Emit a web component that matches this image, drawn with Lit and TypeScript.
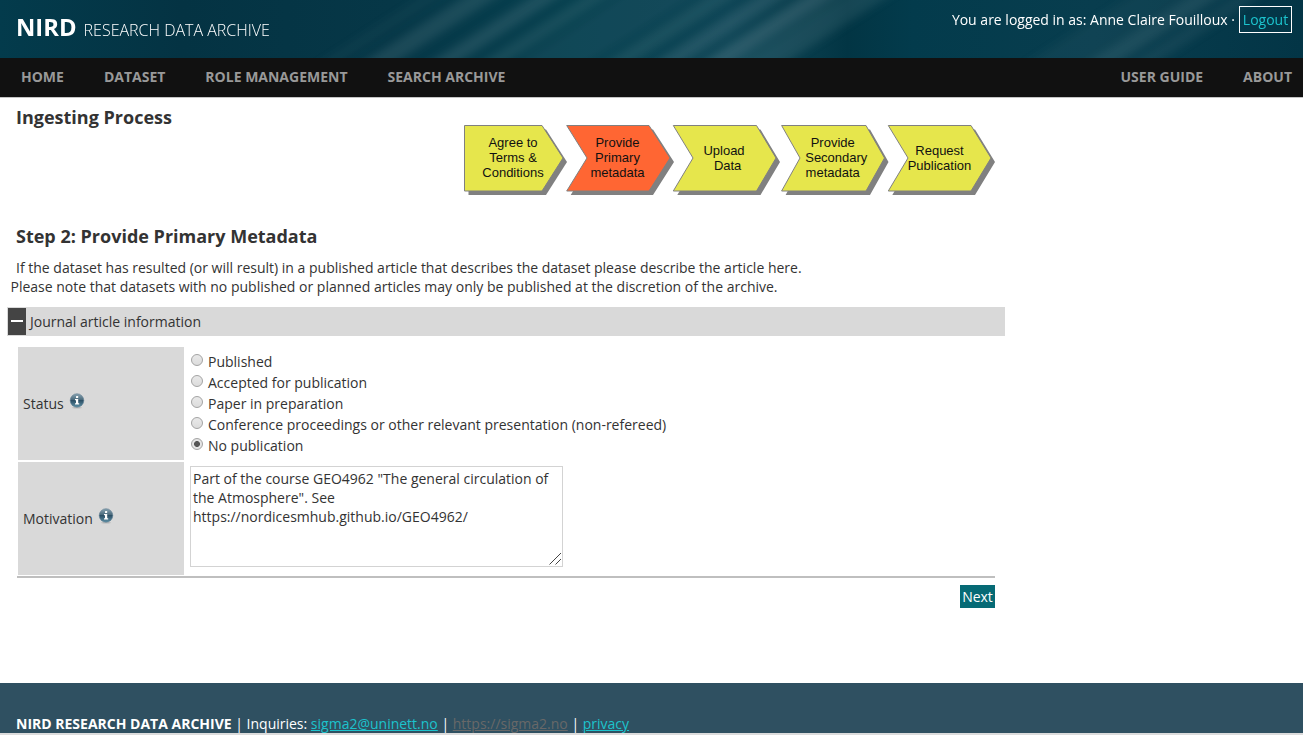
import { LitElement, html, css, svg } from "lit";
import { customElement } from "lit/decorators.js";

interface Step {
  points: string;
  cx: number;
  y: number;
  lines: string[];
  active?: boolean;
}

const STEPS: Step[] = [
  { points: "0.5,0.5 78,0.5 99,33 78,66 0.5,66", cx: 49, y: 22, lines: ["Agree to", "Terms &", "Conditions"] },
  { points: "102.7,0.5 185,0.5 206,33 185,66 102.7,66 123,33", cx: 153.5, y: 22, lines: ["Provide", "Primary", "metadata"], active: true },
  { points: "209.3,0.5 292.5,0.5 312,33 292.5,66 209.3,66 229,33", cx: 260, y: 30, lines: ["Upload", "\u00a0 Data"] },
  { points: "317.6,0.5 402,0.5 420.5,33 402,66 317.6,66 336,33", cx: 368.7, y: 22, lines: ["Provide", "\u00a0 Secondary", "metadata"] },
  { points: "424.3,0.5 507,0.5 527,33 507,66 424.3,66 444,33", cx: 475.5, y: 30, lines: ["Request", "Publication"] },
];

const STATUSES = [
  "Published",
  "Accepted for publication",
  "Paper in preparation",
  "Conference proceedings or other relevant presentation (non-refereed)",
  "No publication",
];

// Light streaks in the banner: x where each meets the bottom edge, width, opacity.
const STREAKS: [number, number, number][] = [
  [335, 10, 0.04],
  [385, 18, 0.11],
  [450, 15, 0.12],
  [500, 14, 0.09],
  [560, 40, 0.05],
  [625, 16, 0.09],
  [675, 16, 0.13],
  [723, 17, 0.16],
  [768, 26, 0.1],
  [1060, 30, 0.04],
  [1108, 18, 0.11],
  [1150, 14, 0.07],
];

@customElement("info-icon")
export class InfoIcon extends LitElement {
  static styles = css`
    :host { display: block; width: 16px; height: 16px; }
    svg { display: block; }
  `;
  render() {
    return html`<svg width="16" height="16" viewBox="0 0 16 16">
      <defs>
        <linearGradient id="g" x1="0" y1="0" x2="0" y2="1">
          <stop offset="0" stop-color="#8aa5b3" />
          <stop offset=".45" stop-color="#49697b" />
          <stop offset=".5" stop-color="#2c5066" />
          <stop offset="1" stop-color="#5f91a6" />
        </linearGradient>
      </defs>
      <ellipse cx="8" cy="14.8" rx="5" ry=".8" fill="#999" opacity=".5" />
      <circle cx="8" cy="7.5" r="6.8" fill="url(#g)" stroke="#54748a" stroke-width=".5" />
      <rect x="7" y="3" width="2.2" height="2" rx=".5" fill="#fff" />
      <path d="M6 6h3.2v4.2h1V11.5H6v-1.3h1V7.3H6z" fill="#fff" />
    </svg>`;
  }
}

@customElement("app-root")
export class AppRoot extends LitElement {
  static styles = css`
    :host {
      display: flex;
      flex-direction: column;
      height: 735px;
      overflow: hidden;
      background: #fff;
      color: #333;
      font: 14px/19px "Open Sans", sans-serif;
    }
    * { box-sizing: border-box; }
    a { color: #1cc3cd; }
    .banner { display: grid; height: 58px; flex: none; background: #04394a; }
    .banner > * { grid-area: 1 / 1; }
    .bar { display: flex; justify-content: space-between; padding: 0 11px 0 16px; color: #fff; z-index: 1; }
    .brand { display: flex; align-items: baseline; gap: 7px; margin-top: 11px; line-height: 32px; white-space: nowrap; }
    .brand b { font-size: 23.8px; }
    .brand span { font-size: 16px; font-weight: 300; letter-spacing: 0; }
    .user { display: flex; gap: 4px; height: 27px; margin-top: 6px; line-height: 28px; white-space: nowrap; }
    .logout { width: 53px; border: 1px solid #fff; line-height: 26px; text-align: center; text-decoration: none; }
    .nav { display: flex; flex: none; height: 39px; padding: 0 11px 0 21px; gap: 40px; background: #111; color: #999; font-size: 14px; font-weight: 700; line-height: 38px; white-space: nowrap; }
    .push { margin-left: auto; }
    .rule { height: 1px; flex: none; background: #c4c4c4; }
    main { flex: none; height: 585px; }
    h1, h2 { margin: 0; font-size: 18px; line-height: 24px; font-weight: 700; }
    .top { display: flex; height: 126px; padding: 7px 0 0 16px; }
    h1 { width: 448px; }
    .steps { margin-top: 20px; display: block; }
    .steps text { font: 13px "Liberation Sans", Arial, sans-serif; fill: #111; text-anchor: middle; }
    h2 { margin-left: 16px; }
    .intro { margin: 10px 0 0 10.5px; white-space: nowrap; }
    .intro span { margin-left: 5.5px; }
    .section { display: flex; align-items: center; width: 998px; height: 29px; margin: 11px 0 0 7px; padding: 1px; background: #d9d9d9; }
    .toggle { width: 18px; height: 27px; padding: 12px 3px; background: #444; margin-right: 4px; }
    .toggle i { display: block; height: 2px; background: #fff; }
    .form { display: grid; grid-template-columns: 166px 1fr; grid-template-rows: 113px 113px; gap: 2px 6px; width: 978px; margin: 11px 0 0 17px; padding: 0 0 1px 1px; border-bottom: 2px solid #bfbfbf; }
    .label { display: flex; align-items: center; gap: 5px; padding-left: 5px; background: #d9d9d9; }
    .label info-icon { margin-top: -5px; }
    .choices { padding-top: 4px; }
    .choice { display: flex; height: 21px; line-height: 21px; gap: 5px; white-space: nowrap; }
    .dot { width: 12px; height: 12px; margin: 3px 0 0 1px; border: 1px solid #a3a3a3; border-radius: 50%; background: linear-gradient(#e9e9e9, #dcdcdc); }
    .dot.on { background: radial-gradient(circle, #555 0 2.6px, #e4e4e4 3.3px); }
    .area { width: 373px; height: 101px; margin-top: 4px; padding: 2px; border: 1px solid #d3d3d3; background: #fff; display: grid; white-space: pre-line; }
    .area > * { grid-area: 1 / 1; }
    .grip { align-self: end; justify-self: end; margin: 0 -2px -1px 0; }
    .next { display: block; width: 35px; height: 23px; margin: 7px 0 0 960px; padding: 0; border: 0; background: #066a75; color: #fff; font: inherit; line-height: 23px; text-align: center; }
    footer { flex: none; height: 50px; padding: 31px 0 0 16px; background: #2f5061; color: #fff; white-space: nowrap; overflow: hidden; }
    footer .dim { color: #686868; }
    .edge { flex: 1; background: #dcdcdc; }
  `;

  private banner() {
    return html`<svg width="1303" height="58" viewBox="0 0 1303 58">
      <defs>
        <linearGradient id="base">
          <stop offset="0" stop-color="#033b4c" />
          <stop offset=".14" stop-color="#043343" />
          <stop offset=".3" stop-color="#063747" />
          <stop offset=".44" stop-color="#06404f" />
          <stop offset=".56" stop-color="#0b4354" />
          <stop offset=".63" stop-color="#063a49" />
          <stop offset=".65" stop-color="#023544" />
          <stop offset=".7" stop-color="#033b4c" />
          <stop offset=".84" stop-color="#083d4e" />
          <stop offset="1" stop-color="#033546" />
        </linearGradient>
        <filter id="soft" x="-20%" y="-60%" width="140%" height="220%"><feGaussianBlur stdDeviation="5" /></filter>
      </defs>
      <rect width="1303" height="58" fill="url(#base)" />
      <g filter="url(#soft)">
        ${STREAKS.map(
          ([x, w, o]) => svg`<path d="M${x - 30} 78L${x + 125} -22" stroke="#a9bcc4" stroke-width=${w} opacity=${o * 1.25} />`
        )}
      </g>
    </svg>`;
  }

  private steps() {
    return html`<svg class="steps" width="532" height="71" viewBox="0 0 532 71">
      ${STEPS.map(
        (s) => svg`
          <polygon points=${s.points} transform="translate(4 4)" fill="#808080" />
          <polygon points=${s.points} fill=${s.active ? "#ff6633" : "#e6e64c"} stroke="#808080" />
          ${s.lines.map((l, i) => svg`<text x=${s.cx} y=${s.y + i * 14.8}>${l}</text>`)}`
      )}
    </svg>`;
  }

  render() {
    return html`
      <header class="banner">
        ${this.banner()}
        <div class="bar">
          <div class="brand"><b>NIRD</b><span>RESEARCH DATA ARCHIVE</span></div>
          <div class="user"><span>You are logged in as: Anne Claire Fouilloux ·</span><a class="logout">Logout</a></div>
        </div>
      </header>
      <nav class="nav">
        <span>HOME</span><span>DATASET</span><span>ROLE MANAGEMENT</span><span>SEARCH ARCHIVE</span>
        <span class="push">USER GUIDE</span><span>ABOUT</span>
      </nav>
      <div class="rule"></div>
      <main>
        <div class="top"><h1>Ingesting Process</h1>${this.steps()}</div>
        <h2>Step 2: Provide Primary Metadata</h2>
        <div class="intro">
          <span>If the dataset has resulted (or will result) in a published article that describes the dataset please describe the article here.</span><br />Please note that datasets with no published or planned articles may only be published at the discretion of the archive.
        </div>
        <div class="section"><div class="toggle"><i></i></div>Journal article information</div>
        <div class="form">
          <div class="label">Status <info-icon></info-icon></div>
          <div class="choices">
            ${STATUSES.map((s, i) => html`<div class="choice"><i class="dot ${i === 4 ? "on" : ""}"></i>${s}</div>`)}
          </div>
          <div class="label">Motivation <info-icon></info-icon></div>
          <div class="area"><span>Part of the course GEO4962 "The general circulation of
the Atmosphere". See
https://nordicesmhub.github.io/GEO4962/</span><svg class="grip" width="13" height="13" viewBox="0 0 13 13"><path d="M.5 12.5L12 1M6.5 12.5L12 7" stroke="#444" fill="none" /></svg></div>
        </div>
        <button class="next">Next</button>
      </main>
      <footer><b>NIRD RESEARCH DATA ARCHIVE</b> | Inquiries: <a href="#">sigma2@uninett.no</a> | <a class="dim" href="#">https://sigma2.no</a> | <a href="#">privacy</a></footer>
      <div class="edge"></div>
    `;
  }
}
